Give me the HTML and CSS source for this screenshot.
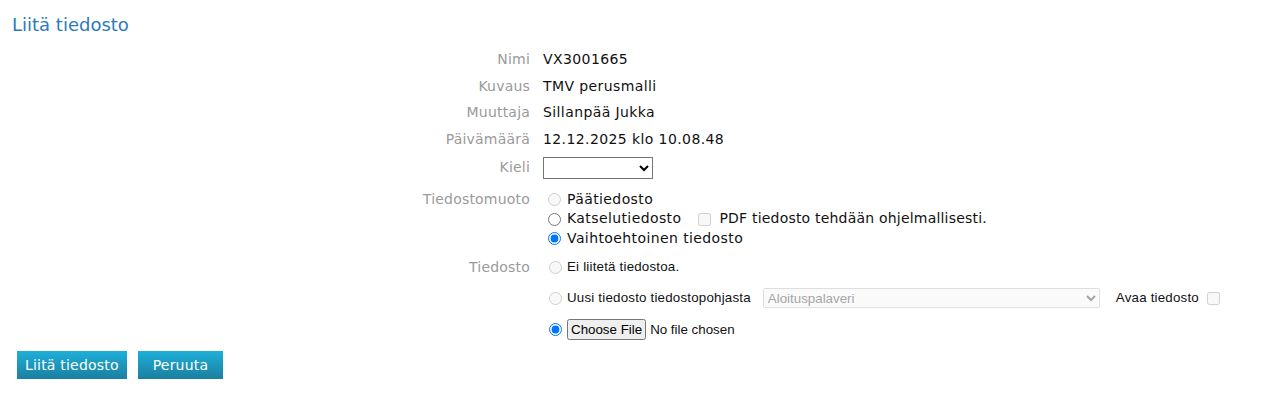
FILE: index.html
```html
<!DOCTYPE html>
<html lang="fi">
<head>
<meta charset="utf-8">
<title>Liitä tiedosto</title>
<link rel="stylesheet" href="styles.css">
</head>
<body>
<div class="page">
  <h1 class="title">Liitä tiedosto</h1>
  <div class="form">
    <div class="label">Nimi</div>
    <div class="value">VX3001665</div>

    <div class="label">Kuvaus</div>
    <div class="value">TMV perusmalli</div>

    <div class="label">Muuttaja</div>
    <div class="value">Sillanpää Jukka</div>

    <div class="label">Päivämäärä</div>
    <div class="value">12.12.2025 klo 10.08.48</div>

    <div class="label label-ctl">Kieli</div>
    <div class="value value-ctl"><select class="lang"><option></option></select></div>

    <div class="label label-type">Tiedostomuoto</div>
    <div class="value value-type">
      <label class="opt"><input type="radio" name="fmt" disabled><span>Päätiedosto</span></label>
      <div class="opt">
        <label class="opt-inline"><input type="radio" name="fmt"><span>Katselutiedosto</span></label>
        <label class="opt-inline pdf"><input type="checkbox" disabled><span>PDF tiedosto tehdään ohjelmallisesti.</span></label>
      </div>
      <label class="opt"><input type="radio" name="fmt" checked><span>Vaihtoehtoinen tiedosto</span></label>
    </div>

    <div class="label label-file">Tiedosto</div>
    <div class="value value-file">
      <label class="fopt"><input type="radio" name="file" disabled><span>Ei liitetä tiedostoa.</span></label>
      <div class="fopt">
        <label class="fopt-inline"><input type="radio" name="file" disabled><span>Uusi tiedosto tiedostopohjasta</span></label>
        <select class="tmpl" disabled><option>Aloituspalaveri</option></select>
        <label class="open"><span>Avaa tiedosto</span><input type="checkbox" disabled></label>
      </div>
      <div class="fopt">
        <input type="radio" name="file" checked>
        <input type="file" class="file">
      </div>
    </div>
  </div>
  <div class="actions">
    <button class="btn">Liitä tiedosto</button>
    <button class="btn btn-cancel">Peruuta</button>
  </div>
</div>
</body>
</html>
```

FILE: styles.css
```css
html, body {
  margin: 0;
  padding: 0;
  background: #fff;
}

body {
  font-family: "DejaVu Sans", Verdana, sans-serif;
  font-size: 14px;
  color: #111;
}

.page {
  padding: 0 12px;
}

.title {
  margin: 14px 0 0;
  font-size: 18px;
  line-height: 22px;
  font-weight: normal;
  color: #2b7bbb;
}

.form {
  margin-top: 10px;
  display: grid;
  grid-template-columns: 518px 1fr;
  column-gap: 13px;
  letter-spacing: 0.4px;
}

.label {
  text-align: right;
  color: #9a9a9a;
  padding: 4px 0;
  line-height: 18.67px;
  letter-spacing: 0.2px;
}

.value {
  padding: 4px 0;
  line-height: 18.67px;
}

.label-ctl {
  padding-top: 5px;
}

.value-ctl {
  display: flex;
  align-items: center;
  padding-top: 4px;
  padding-bottom: 5px;
}

.lang {
  width: 110px;
  height: 22px;
  margin: 0;
  border: 1px solid #767676;
  border-radius: 0;
  background: #fff;
}

.label-type {
  padding-top: 6px;
  line-height: 19.5px;
}

.value-type {
  padding: 6px 0 3px;
  line-height: 19.5px;
}

.opt {
  display: flex;
  align-items: center;
  height: 19.7px;
}

.opt-inline {
  display: flex;
  align-items: center;
}

.opt input,
.opt-inline input {
  margin: 0 6px 0 5px;
}

.pdf {
  margin-left: 12px;
}

.pdf input {
  margin: 0 8px 0 5px;
}

.pdf span {
  letter-spacing: 0.2px;
}

.label-file {
  padding-top: 6px;
}

.value-file {
  padding: 0;
  font-family: "Liberation Sans", Arial, sans-serif;
  font-size: 13.33px;
  letter-spacing: 0.2px;
}

.fopt {
  display: flex;
  align-items: center;
  height: 31px;
}

.fopt input[type="radio"] {
  margin: 0 5px 0 6px;
}

.fopt-inline {
  display: flex;
  align-items: center;
}

.tmpl {
  margin-left: 12px;
  width: 337px;
  height: 20px;
  font-family: "Liberation Sans", Arial, sans-serif;
  font-size: 13.33px;
}

.open {
  display: flex;
  align-items: center;
  margin-left: 16px;
}

.open input {
  margin: 0 0 0 8px;
}

.file {
  font-family: "Liberation Sans", Arial, sans-serif;
  font-size: 13.33px;
  letter-spacing: 0;
}

.file::file-selector-button {
  padding: 1px 2px;
  margin-right: 4px;
  letter-spacing: 0;
}

.actions {
  margin-top: 6px;
  padding-left: 5px;
  display: flex;
  gap: 11px;
}

.btn {
  height: 28px;
  padding: 0 8px;
  border: none;
  border-radius: 0;
  background: linear-gradient(#1eafd9, #1a7f9f);
  color: #fff;
  font-family: "DejaVu Sans", Verdana, sans-serif;
  font-size: 14px;
  letter-spacing: 0.2px;
  cursor: pointer;
}

.btn-cancel {
  padding: 0 15px;
}
```
